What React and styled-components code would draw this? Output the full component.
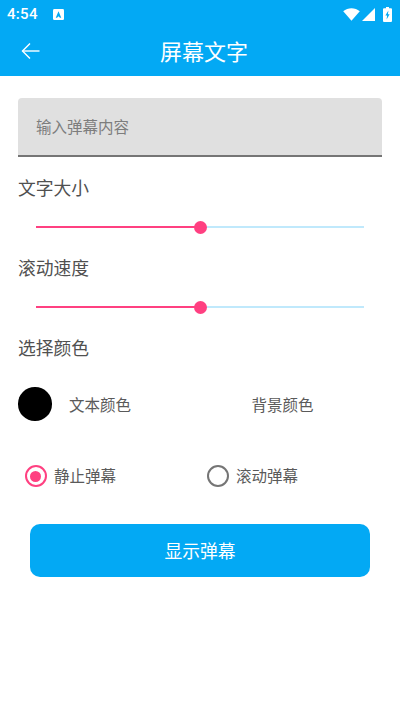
import React from "react";
import styled, { createGlobalStyle } from "styled-components";

const GlobalStyle = createGlobalStyle`
  html, body {
    margin: 0;
    padding: 0;
    background: #fff;
  }
  * {
    box-sizing: border-box;
  }
`;

const FONT = `Roboto, "Noto Sans CJK SC", sans-serif`;
const BLUE = "#03a9f4";
const PINK = "#ff4081";

const App = () => {
  return (
    <Page>
      <GlobalStyle />
      <Header>
        <StatusBar>
          <Clock>4:54</Clock>
          <NotifyIcon viewBox="0 0 12 12">
            <rect width="12" height="12" rx="1.5" fill="#fff" />
            <path d="M6 2.4 L9 9.6 H7.6 L6 7.9 L4.4 9.6 H3 Z" fill={BLUE} />
          </NotifyIcon>
          <StatusIcons>
            <svg width="17" height="13" viewBox="0 0 17 13">
              <path d="M0.2 3.2 C5 -0.9 12 -0.9 16.8 3.2 L8.5 12.8 Z" fill="#fff" />
            </svg>
            <svg width="13" height="13" viewBox="0 0 13 13">
              <path d="M13 0 V13 H0 Z" fill="#fff" />
            </svg>
            <svg width="9" height="15" viewBox="0 0 9 15">
              <path d="M3 0 H6 V1.2 H8 A1 1 0 0 1 9 2.2 V14 A1 1 0 0 1 8 15 H1 A1 1 0 0 1 0 14 V2.2 A1 1 0 0 1 1 1.2 H3 Z" fill="#fff" />
              <path d="M5.4 3.5 L2.4 8.6 H4.1 L3.6 12.5 L6.6 7.2 H4.9 Z" fill={BLUE} />
            </svg>
          </StatusIcons>
        </StatusBar>
        <Toolbar>
          <BackButton>
            <svg width="20" height="20" viewBox="0 0 20 20" fill="none" stroke="#fff" strokeWidth="1.4">
              <path d="M18.5 10 H1.5" />
              <path d="M9 2.5 L1.5 10 L9 17.5" />
            </svg>
          </BackButton>
          <Title>屏幕文字</Title>
        </Toolbar>
      </Header>

      <Content>
        <TextField>输入弹幕内容</TextField>

        <Label>文字大小</Label>
        <Slider />
        <Label>滚动速度</Label>
        <Slider />
        <Label>选择颜色</Label>

        <ColorRow>
          <ColorOption>
            <Swatch />
            <OptionText>文本颜色</OptionText>
          </ColorOption>
          <ColorOption>
            <OptionText>背景颜色</OptionText>
          </ColorOption>
        </ColorRow>

        <RadioRow>
          <RadioOption>
            <Radio $checked />
            <RadioText>静止弹幕</RadioText>
          </RadioOption>
          <RadioOption>
            <Radio />
            <RadioText>滚动弹幕</RadioText>
          </RadioOption>
        </RadioRow>

        <ShowButton>显示弹幕</ShowButton>
      </Content>
    </Page>
  );
};

const Slider = () => (
  <SliderWrap>
    <Track>
      <TrackDone />
      <TrackRest />
    </Track>
    <Thumb />
  </SliderWrap>
);

export default App;

const Page = styled.div`
  width: 400px;
  height: 712px;
  overflow: hidden;
  background: #fff;
  font-family: ${FONT};
`;

const Header = styled.header`
  background: ${BLUE};
  height: 76px;
`;

const StatusBar = styled.div`
  height: 28px;
  display: flex;
  align-items: center;
  padding: 0 8px 0 7px;
  color: #fff;
`;

const Clock = styled.span`
  font-size: 15px;
  font-weight: 500;
  letter-spacing: 0.3px;
`;

const NotifyIcon = styled.svg`
  width: 11px;
  height: 11px;
  margin-left: 15px;
`;

const StatusIcons = styled.div`
  margin-left: auto;
  display: flex;
  align-items: center;
  gap: 2px;
  svg:last-child {
    margin-left: 6px;
  }
`;

const Toolbar = styled.div`
  height: 48px;
  position: relative;
  display: flex;
  align-items: center;
  justify-content: center;
`;

const BackButton = styled.div`
  position: absolute;
  left: 21px;
  top: 13px;
  width: 20px;
  height: 20px;
  display: flex;
`;

const Title = styled.h1`
  margin: 0 0 4px 8px;
  font-size: 22px;
  font-weight: 400;
  color: #fff;
`;

const Content = styled.main`
  padding: 22px 18px 0;
`;

const TextField = styled.div`
  height: 59px;
  padding: 0 0 2px 18px;
  display: flex;
  align-items: center;
  background: #e0e0e0;
  border-bottom: 2px solid #757575;
  border-radius: 4px 4px 0 0;
  font-size: 15.5px;
  color: #7d7d7d;
`;

const Label = styled.div`
  height: 26px;
  line-height: 28px;
  margin-top: 14px;
  font-size: 17.8px;
  color: #505050;

  ${TextField} + & {
    margin-top: 18px;
  }
`;

const SliderWrap = styled.div`
  position: relative;
  height: 28px;
  margin-top: 12px;
  padding: 0 18px;
  display: flex;
  align-items: center;
`;

const Track = styled.div`
  flex: 1;
  display: flex;
  height: 2px;
`;

const TrackDone = styled.div`
  flex: 1;
  background: ${PINK};
`;

const TrackRest = styled.div`
  flex: 1;
  background: #c0e9fc;
`;

const Thumb = styled.div`
  position: absolute;
  left: 50%;
  top: 50%;
  width: 13px;
  height: 13px;
  margin: -6.5px 0 0 -6.5px;
  border-radius: 50%;
  background: ${PINK};
`;

const ColorRow = styled.div`
  display: grid;
  grid-template-columns: 182px 1fr;
  margin-top: 26px;
  height: 34px;
`;

const ColorOption = styled.div`
  display: flex;
  align-items: center;
  &:last-child {
    padding-left: 51.5px;
  }
`;

const Swatch = styled.div`
  width: 33.5px;
  height: 33.5px;
  border-radius: 50%;
  background: #000;
  margin-right: 17.5px;
`;

const OptionText = styled.span`
  font-size: 15.5px;
  color: #5a5a5a;
`;

const RadioText = styled(OptionText)`
  margin-bottom: 2px;
`;

const RadioRow = styled.div`
  display: grid;
  grid-template-columns: 182px 1fr;
  margin-top: 43px;
  padding-left: 6.5px;
  height: 23px;
`;

const RadioOption = styled.div`
  display: flex;
  align-items: center;
  gap: 7.5px;
`;

const Radio = styled.span`
  width: 22px;
  height: 22px;
  border-radius: 50%;
  border: 2.5px solid ${(p) => (p.$checked ? PINK : "#757575")};
  display: flex;
  align-items: center;
  justify-content: center;
  &::after {
    content: "";
    width: 11px;
    height: 11px;
    border-radius: 50%;
    background: ${(p) => (p.$checked ? PINK : "transparent")};
  }
`;

const ShowButton = styled.button`
  display: block;
  width: 340px;
  height: 53px;
  margin: 37px 0 0 12px;
  padding-bottom: 2px;
  border: none;
  border-radius: 10px;
  background: ${BLUE};
  color: #fff;
  font-family: ${FONT};
  font-size: 17.8px;
`;
